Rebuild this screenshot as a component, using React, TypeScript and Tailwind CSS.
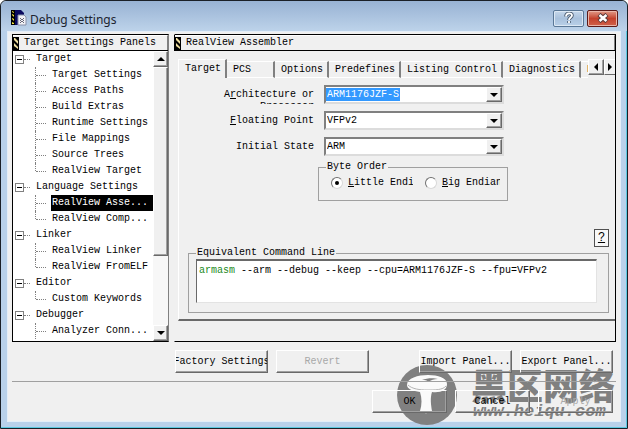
import { useState, type ReactNode } from 'react';
import clsx from 'clsx';

const tree = [
  {
    label: 'Target',
    items: ['Target Settings', 'Access Paths', 'Build Extras', 'Runtime Settings', 'File Mappings', 'Source Trees', 'RealView Target'],
  },
  { label: 'Language Settings', items: ['RealView Asse...', 'RealView Comp...'] },
  { label: 'Linker', items: ['RealView Linker', 'RealView FromELF'] },
  { label: 'Editor', items: ['Custom Keywords'] },
  { label: 'Debugger', items: ['Analyzer Conn...'], more: true },
];

const tabs = ['Target', 'PCS', 'Options', 'Predefines', 'Listing Control', 'Diagnostics', 'Extras'];

const raised = 'border border-t-white border-l-white border-r-[#696969] border-b-[#696969] shadow-[inset_-1px_-1px_0_#a0a0a0]';

function Triangle({ dir }: { dir: 'up' | 'down' | 'left' | 'right' }) {
  const points = {
    up: '0,6 8,6 4,2',
    down: '0,2 8,2 4,6',
    left: '6,0 6,8 2,4',
    right: '2,0 2,8 6,4',
  }[dir];
  return (
    <svg width="8" height="8" viewBox="0 0 8 8" className="shrink-0" aria-hidden="true">
      <polygon points={points} fill="#000" />
    </svg>
  );
}

function HazardStripe() {
  return (
    <svg width="6" height="13" viewBox="0 0 6 13" className="shrink-0" aria-hidden="true">
      <rect width="6" height="13" fill="#000" />
      <path d="M1 1h1l3 3v3L1 3zM1 6l4 4v2L1 9z" fill="#f0e0a0" />
    </svg>
  );
}

function PanelHeader({ children }: { children: ReactNode }) {
  return (
    <div className="border-b border-black">
      <h2 className="flex h-[15px] items-center gap-[5px] border-t border-r border-t-white border-r-[#808080]">
        <HazardStripe />
        {children}
      </h2>
    </div>
  );
}

function PushButton({ children, className, disabled }: { children: ReactNode; className: string; disabled?: boolean }) {
  return (
    <button
      type="button"
      disabled={disabled}
      className={clsx('flex h-[23px] items-center justify-center overflow-hidden whitespace-nowrap', raised, disabled && 'text-[#a8a8a8]', className)}
    >
      {children}
    </button>
  );
}

function Combo({ id, options, highlighted }: { id: string; options: string[]; highlighted?: boolean }) {
  return (
    <div className="flex h-[19px] w-[180px] border-2 border-t-[#808080] border-l-[#808080] border-r-[#dcdcdc] border-b-[#dcdcdc] bg-white">
      <div className="flex min-w-0 flex-1 items-center">
        <select
          id={id}
          className={clsx('h-[13px] appearance-none pl-px leading-[13px] outline-none', highlighted ? 'w-[74px] bg-[#3399ff] text-white' : 'w-full')}
        >
          {options.map((o) => (
            <option key={o}>{o}</option>
          ))}
        </select>
      </div>
      <span className={clsx('flex w-4 items-center justify-center bg-[#f0f0f0]', raised)}>
        <Triangle dir="down" />
      </span>
    </div>
  );
}

function Radio({ name, defaultChecked }: { name: string; defaultChecked?: boolean }) {
  return (
    <input
      type="radio"
      name={name}
      defaultChecked={defaultChecked}
      className="grid h-3 w-3 shrink-0 appearance-none place-items-center rounded-full border border-t-[#707070] border-r-[#d8d8d8] border-b-[#d8d8d8] border-l-[#707070] bg-white before:h-1 before:w-1 before:rounded-full checked:before:bg-black"
    />
  );
}

function TitleBar() {
  return (
    <header className="flex h-[30px] items-center gap-[3px] rounded-t-md bg-linear-to-b from-[#98b2d3] to-[#bdd3ea] pr-[9px] pl-[10px]">
      <svg width="16" height="16" viewBox="0 0 16 16" className="mt-1" aria-hidden="true">
        <path d="M1 0h9l3 3v12H1z" fill="#0a0a60" />
        <path d="M0 0h4v15H0z" fill="#000" />
        <path d="M1 1l2 1v1L1 2zM1 4l2 1v2L1 5zM1 8l2 1v2L1 9zM1 12l2 1v1H1z" fill="#f2e23c" />
        <path d="M7 5h6l2 2v8H7z" fill="#f2f2f6" stroke="#8890a8" />
        <path d="M9 8h1v1H9zM12 8h1v1h-1zM10 9h2v1h-2zM9 10h1v1H9zM12 10h1v1h-1zM10 11h2v1h-2zM9 12h1v1H9zM12 12h1v1h-1z" fill="#667" />
      </svg>
      <h1 className="mt-2 flex-1 font-['Noto_Sans',sans-serif] text-xs leading-5 text-[#1c2430]">Debug Settings</h1>
      <div className="mt-1 flex gap-[3px]">
        <button
          type="button"
          aria-label="Help"
          className="flex h-[17px] w-[31px] items-center justify-center rounded-xs border border-[#5a7796] bg-linear-to-b from-[#c6d7ea] via-[#a9c1dc] to-[#b9d0e8] shadow-[inset_0_0_0_1px_#dce8f4]"
        >
          <svg width="10" height="12" viewBox="0 0 10 12" fill="none" aria-hidden="true">
            <path d="M2 4.500C2 .5 8 .5 8 3.500 8 5.500 5 5.500 5 8M5 9v2" stroke="#4c5c70" strokeWidth="3.600" />
            <path d="M2 4.500C2 .5 8 .5 8 3.500 8 5.500 5 5.500 5 8M5 9v2" stroke="#fff" strokeWidth="1.800" />
          </svg>
        </button>
        <button
          type="button"
          aria-label="Close"
          className="flex h-[17px] w-[31px] items-center justify-center rounded-xs border border-[#5c1a18] bg-linear-to-b from-[#e09a88] via-[#c4412c] to-[#d0614a] shadow-[inset_0_0_0_1px_#eab5a8]"
        >
          <svg width="12" height="10" viewBox="0 0 12 10" fill="none" aria-hidden="true">
            <path d="M2 1.500l8 7M10 1.500l-8 7" stroke="#5b3a3a" strokeWidth="4.500" />
            <path d="M2.500 2l7 6M9.500 2l-7 6" stroke="#fff" strokeWidth="2.500" />
          </svg>
        </button>
      </div>
    </header>
  );
}

function SettingsTree() {
  const [selected, setSelected] = useState('RealView Asse...');
  return (
    <aside className="flex w-[157px] shrink-0 flex-col border border-black border-r-[#808080]">
      <PanelHeader>Target Settings Panels</PanelHeader>
      <div className="flex flex-1 bg-white">
        <ul className="min-w-0 flex-1 pb-[2px]">
          {tree.map((group) => (
            <li key={group.label}>
              <div className="flex h-4 items-center pl-[2px]">
                <button type="button" aria-label={`Collapse ${group.label}`} className="flex h-[9px] w-[9px] items-center justify-center border border-[#808080]">
                  <span className="h-px w-[5px] bg-black" />
                </button>
                <span className="mr-[6px] w-[6px] border-t border-dotted border-[#808080]" />
                {group.label}
              </div>
              <ul>
                {group.items.map((item, i) => (
                  <li key={item} className="flex h-4 items-center pl-[22px]">
                    <span className={clsx('w-px self-start border-l border-dotted border-[#808080]', i < group.items.length - 1 || group.more ? 'h-4' : 'h-2')} />
                    <span className="mr-[5px] w-[10px] border-t border-dotted border-[#808080]" />
                    <button
                      type="button"
                      onClick={() => setSelected(item)}
                      className={clsx('h-4 flex-1 pl-px text-left whitespace-nowrap', item === selected && 'bg-black text-white')}
                    >
                      {item}
                    </button>
                  </li>
                ))}
              </ul>
            </li>
          ))}
        </ul>
        <div className="flex w-[15px] flex-col bg-[#f7f7f7]">
          <button type="button" aria-label="Scroll up" className={clsx('flex h-4 items-center justify-center bg-[#f0f0f0]', raised)}>
            <Triangle dir="up" />
          </button>
          <div className={clsx('h-[189px] bg-[#f0f0f0]', raised)} />
          <button type="button" aria-label="Scroll down" className={clsx('mt-auto flex h-4 items-center justify-center bg-[#f0f0f0]', raised)}>
            <Triangle dir="down" />
          </button>
        </div>
      </div>
    </aside>
  );
}

function TabStrip() {
  const [active, setActive] = useState('Target');
  return (
    <div className="flex h-[19px]">
      <div role="tablist" className="flex min-w-0 flex-1 items-end overflow-hidden">
        {tabs.map((tab) => (
          <button
            key={tab}
            type="button"
            role="tab"
            aria-selected={tab === active}
            onClick={() => setActive(tab)}
            className={clsx(
              'min-w-12 shrink-0 border-t border-r-2 border-t-white border-r-[#808080] pr-1 pl-[6px] text-left',
              tab === active ? 'h-[19px] border-l border-l-white' : 'h-[17px] border-b border-b-white'
            )}
          >
            {tab}
          </button>
        ))}
      </div>
      <button type="button" aria-label="Previous tabs" className={clsx('flex h-4 w-4 items-center justify-center', raised)}>
        <Triangle dir="left" />
      </button>
      <button type="button" aria-label="More tabs" className="flex h-4 w-[11px] items-center justify-center border-t border-b border-l border-t-white border-b-[#696969] border-l-white">
        <Triangle dir="right" />
      </button>
    </div>
  );
}

function AssemblerPanel() {
  return (
    <section className="flex min-w-0 flex-1 flex-col border border-black border-l-transparent">
      <div className="-ml-px border-l border-black">
        <PanelHeader>RealView Assembler</PanelHeader>
      </div>
      <div className="mt-2 mb-5 flex flex-1 flex-col pl-[3px]">
        <TabStrip />
        <div role="tabpanel" className="flex flex-1 flex-col border-b-2 border-l border-b-[#696969] border-l-white pt-[7px] pr-[6px] pl-[9px]">
          <div className="grid grid-cols-[126px_180px] gap-x-[10px] gap-y-[7px]">
            <label htmlFor="arch" className="mt-1 h-[15px] overflow-hidden text-right leading-3">
              A<u>r</u>chitecture or Processor
            </label>
            <Combo id="arch" options={['ARM1176JZF-S', 'ARM1136JF-S', 'ARM926EJ-S']} highlighted />
            <label htmlFor="fpu" className="self-center text-right">
              <u>F</u>loating Point
            </label>
            <Combo id="fpu" options={['VFPv2', 'VFPv3', 'None']} />
            <label htmlFor="state" className="self-center text-right">
              Initial State
            </label>
            <Combo id="state" options={['ARM', 'Thumb']} />
          </div>

          <fieldset className="mt-[5px] ml-[130px] w-[190px] border border-[#a0a0a0] pb-[11px] pl-[7px]">
            <legend className="px-px leading-3">Byte Order</legend>
            <div className="mt-1 flex gap-3 pl-[5px] leading-3">
              <label className="flex w-[82px] gap-[5px] overflow-hidden whitespace-nowrap">
                <Radio name="byteOrder" defaultChecked />
                <span>
                  <u>L</u>ittle Endian
                </span>
              </label>
              <label className="flex w-[75px] gap-[5px] overflow-hidden whitespace-nowrap">
                <Radio name="byteOrder" />
                <span>
                  <u>B</u>ig Endian
                </span>
              </label>
            </div>
          </fieldset>

          <button type="button" aria-label="Help on this panel" className="mt-auto h-[18px] w-[15px] self-end border border-[#505050] bg-[#f8f8f8] text-xs leading-4 underline">
            ?
          </button>

          <fieldset className="mb-[6px] border border-[#a0a0a0] px-[7px] pb-[9px]">
            <legend className="px-px leading-3">Equivalent Command Line</legend>
            <div
              role="textbox"
              aria-readonly="true"
              aria-label="Equivalent Command Line"
              className="mr-1 h-[44px] border border-t-2 border-t-[#696969] border-l-[#696969] border-r-[#e3e3e3] border-b-[#e3e3e3] bg-white px-[2px] py-1 leading-3"
            >
              <span className="text-[#1c8a1c]">armasm</span> --arm --debug --keep --cpu=ARM1176JZF-S --fpu=VFPv2
            </div>
          </fieldset>
        </div>
      </div>
    </section>
  );
}

function Watermark() {
  return (
    <div className="pointer-events-none absolute right-[12px] bottom-[3px] flex items-end gap-[13px] text-[#808080]">
      <svg width="62" height="62" viewBox="0 0 62 62" aria-hidden="true">
        <circle cx="31" cy="32" r="30" fill="#808080" />
        <path d="M11 22C11 15 22 12 32 12c10 0 19 3 19 9 0 6-6 9-15 8-2 6-1 13 0 19-3 3-9 3-12 0 2-6 2-13 0-19-7-1-13-3-13-7z" fill="#fafafa" />
        <path d="M12 22c4 4 12 5 19 5 8 0 16 0 19-4" fill="none" stroke="#b4b4b4" />
        <path d="M26 17c5-2 12-2 16-1-4 0-7 1-10 3-1-2-3-2-6-2z" fill="#808080" />
      </svg>
      <div className="mb-1 w-[144px]">
        <p className="font-['Noto_Sans_CJK_SC',sans-serif] text-[36px] leading-[38px] font-black whitespace-nowrap">黑区网络</p>
        <p className="pl-[2px] text-[17px] leading-[18px] font-bold italic">www.heiqu.com</p>
      </div>
    </div>
  );
}

export default function App() {
  return (
    <div className="relative flex min-h-screen flex-col overflow-hidden rounded-t-md border border-[#1a1f26] bg-[#b9d1ea] font-['Liberation_Mono','Noto_Sans_CJK_SC',monospace] text-[10px] leading-[14px] text-black shadow-[inset_-1px_-1px_0_#5cc8e0]">
      <TitleBar />
      <main className="mx-[6px] mb-[6px] flex flex-1 flex-col border border-[#e4eef8] bg-[#f0f0f0] px-1 pt-[2px] pb-[6px]">
        <div className="flex gap-[5px]">
          <SettingsTree />
          <AssemblerPanel />
        </div>
        <Watermark />
        <div className="relative mt-2 flex gap-2 border-b border-[#a0a0a0] pr-[3px] pb-2 pl-[163px]">
          <PushButton className="w-[93px]">Factory Settings</PushButton>
          <PushButton className="w-[93px]" disabled>
            Revert
          </PushButton>
          <PushButton className="ml-auto w-[93px]">Import Panel...</PushButton>
          <PushButton className="w-[93px]">Export Panel...</PushButton>
        </div>
        <div className="relative mt-2 flex justify-end gap-2 pr-[3px]">
          <PushButton className="w-[75px]">OK</PushButton>
          <PushButton className="w-[75px]">Cancel</PushButton>
          <PushButton className="w-[75px]" disabled>
            Apply
          </PushButton>
        </div>
      </main>
    </div>
  );
}
